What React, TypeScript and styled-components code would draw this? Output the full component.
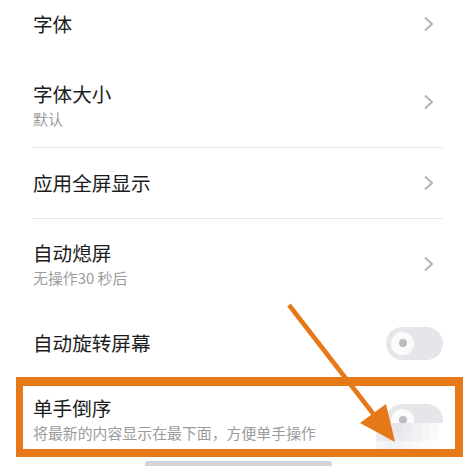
import React from 'react';
import styled, { createGlobalStyle } from 'styled-components';

const GlobalStyle = createGlobalStyle`
  html, body {
    margin: 0;
    padding: 0;
    background: #ffffff;
  }
  body {
    font-family: 'Noto Sans CJK SC', 'Noto Sans', sans-serif;
    -webkit-font-smoothing: antialiased;
  }
`;

const ORANGE = '#e77818';

const Screen = styled.div`
  position: relative;
  width: 474px;
  height: 466px;
  overflow: hidden;
  background: #fff;
`;

const List = styled.div`
  display: flex;
  flex-direction: column;
  margin-top: -10px;
`;

const Row = styled.div<{ h: number }>`
  height: ${p => p.h}px;
  display: flex;
  align-items: center;
  justify-content: space-between;
  padding: 0 31px 0 33px;
  box-sizing: border-box;
`;

const TextBlock = styled.div<{ shift?: number }>`
  display: flex;
  flex-direction: column;
  gap: 5px;
  transform: translateY(${p => p.shift ?? 0}px);
`;

const Title = styled.div`
  font-size: 19.6px;
  line-height: 22px;
  color: #1c1c1c;
`;

const Sub = styled.div`
  font-size: 14.9px;
  line-height: 17px;
  color: #9b9b9b;
`;

const Divider = styled.div`
  height: 1px;
  margin: 0 31px 0 32px;
  background: #e8e8e8;
`;

const ChevronWrap = styled.div`
  width: 20px;
  display: flex;
  justify-content: flex-start;
`;

const Track = styled.div<{ shift?: number }>`
  width: 57px;
  height: 33px;
  border-radius: 17px;
  background: #e6e6ea;
  display: flex;
  align-items: center;
  padding-left: 5px;
  box-sizing: border-box;
  transform: translateY(${p => p.shift ?? 0}px);
`;

const Knob = styled.div`
  width: 23px;
  height: 23px;
  border-radius: 50%;
  background: #fbfbfc;
  display: flex;
  align-items: center;
  justify-content: center;
`;

const Dot = styled.div`
  width: 8px;
  height: 8px;
  border-radius: 50%;
  background: #bcbcc1;
`;

const HomeBar = styled.div`
  position: absolute;
  left: 145px;
  bottom: 0;
  width: 187px;
  height: 5px;
  border-radius: 3px 3px 0 0;
  background: #d4d4d6;
`;

const HighlightBox = styled.div`
  position: absolute;
  left: 16px;
  top: 377px;
  width: 447px;
  height: 80px;
  box-sizing: border-box;
  border: 8px solid ${ORANGE};
  border-top-width: 9px;
  border-left-width: 7px;
`;

const Mosaic = styled.div`
  position: absolute;
  left: 376px;
  top: 423px;
  display: grid;
  grid-template-columns: repeat(8, 9px);
  grid-auto-rows: 9px;
`;

const Tile = styled.div<{ c: string }>`
  background: ${p => p.c};
`;

const Overlay = styled.svg`
  position: absolute;
  left: 0;
  top: 0;
`;

const Chevron = () => (
  <ChevronWrap>
    <svg width="12" height="16" viewBox="0 0 12 16">
      <polyline points="2,1.5 9,8 2,14.5" fill="none" stroke="#b4b4b4" strokeWidth="2" />
    </svg>
  </ChevronWrap>
);

const Toggle = ({ shift }: { shift?: number }) => (
  <Track shift={shift}>
    <Knob>
      <Dot />
    </Knob>
  </Track>
);

const mosaicColors = [
  '#eceef2', '#e6e8ec', '#e4e6ea', '#e9ebee', '#eff0f3', '#f4f5f7', '#f9f9fa', '#ffffff',
  '#eaecef', '#e5e7eb', '#e8eaed', '#eceef1', '#f0f1f4', '#f5f6f7', '#fafafb', '#ffffff',
  '#f4f5f7', '#f1f2f4', '#f2f3f5', '#f5f6f8', '#f7f8f9', '#fafbfb', '#fdfdfd', '#ffffff',
];

const App: React.FC = () => (
  <>
    <GlobalStyle />
    <Screen>
      <List>
        <Row h={67}>
          <Title>字体</Title>
          <Chevron />
        </Row>
        <Row h={90}>
          <TextBlock shift={3}>
            <Title>字体大小</Title>
            <Sub>默认</Sub>
          </TextBlock>
          <Chevron />
        </Row>
        <Divider />
        <Row h={70}>
          <Title>应用全屏显示</Title>
          <Chevron />
        </Row>
        <Divider />
        <Row h={90}>
          <TextBlock>
            <Title>自动熄屏</Title>
            <Sub>无操作30 秒后</Sub>
          </TextBlock>
          <Chevron />
        </Row>
        <Row h={68}>
          <Title>自动旋转屏幕</Title>
          <Toggle />
        </Row>
        <Row h={80}>
          <TextBlock shift={2}>
            <Title>单手倒序</Title>
            <Sub>将最新的内容显示在最下面，方便单手操作</Sub>
          </TextBlock>
          <Toggle shift={3} />
        </Row>
      </List>

      <Mosaic>
        {mosaicColors.map((c, i) => (
          <Tile key={i} c={c} />
        ))}
      </Mosaic>

      <HighlightBox />

      <Overlay width="474" height="466" viewBox="0 0 474 466">
        <line x1="289" y1="305" x2="378" y2="420" stroke={ORANGE} strokeWidth="4.5" />
        <polygon points="395,442 360,423 386,404" fill={ORANGE} />
      </Overlay>

      <HomeBar />
    </Screen>
  </>
);

export default App;
